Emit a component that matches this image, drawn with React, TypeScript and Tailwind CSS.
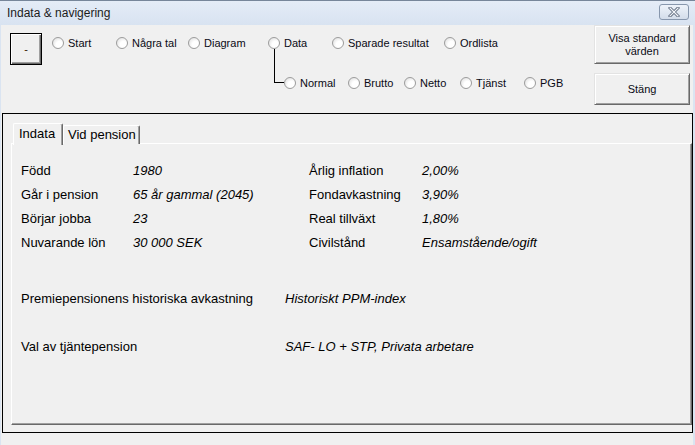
import React from "react";

const Radio = ({ label, w }: { label: string; w?: string }) => (
  <div className={`flex items-center gap-[4px] h-[14px] shrink-0 ${w ?? ""}`}>
    <span className="w-[12px] h-[12px] rounded-full border border-[#9c9c9c] bg-[radial-gradient(circle_at_65%_65%,#ffffff_35%,#d8d8d8_100%)] shrink-0" />
    <span className="text-[11px] leading-[14px] text-[#0a0a14] whitespace-nowrap">{label}</span>
  </div>
);

const btn3d =
  "bg-[#f0f0f0] border border-t-[#e3e3e3] border-l-[#e3e3e3] border-b-[#696969] border-r-[#696969] shadow-[inset_1px_1px_0_#ffffff,inset_-1px_-1px_0_#a0a0a0]";

const Row = ({ a, b, c, d }: { a: string; b: string; c: string; d: string }) => (
  <div className="flex h-[24px] items-center text-[13px] leading-[24px]">
    <div className="w-[112px] shrink-0">{a}</div>
    <div className="w-[176px] shrink-0 italic">{b}</div>
    <div className="w-[113px] shrink-0">{c}</div>
    <div className="italic">{d}</div>
  </div>
);

export default function App() {
  return (
    <div className="w-[695px] h-[445px] flex flex-col overflow-hidden bg-[#dae4f1] font-['Liberation_Sans',Arial,sans-serif] text-black">
      {/* Title bar */}
      <div className="h-[25px] shrink-0 flex items-start justify-between pl-[7px] pr-[6px] border-t border-[#77869a] bg-gradient-to-b from-[#e4ecf7] to-[#d8e3f1]">
        <span className="text-[12px] leading-[24px] text-[#1b1b1b]">Indata &amp; navigering</span>
        <div className="mt-[3px] w-[30px] h-[16px] rounded-[3px] border border-[#8797ad] bg-gradient-to-b from-[#eef3fa] to-[#d3ddea] flex items-center justify-center">
          <svg width="12" height="10" viewBox="0 0 12 10">
            <path d="M2 1 L10 9 M10 1 L2 9" stroke="#5e6b7e" strokeWidth="3" strokeLinecap="square" />
            <path d="M2 1 L10 9 M10 1 L2 9" stroke="#f4f6fa" strokeWidth="1.2" strokeLinecap="square" />
          </svg>
        </div>
      </div>

      {/* Body */}
      <div className="flex-1 ml-[1px] mr-[2px] bg-[#f0f0f0] flex flex-col">
        {/* Top navigation area */}
        <div className="h-[88px] shrink-0 flex items-start">
          <button className="ml-[9px] mt-[8px] w-[32px] h-[32px] border border-black bg-[#f0f0f0] shadow-[inset_1px_1px_0_#ffffff,inset_-1px_-1px_0_#696969,inset_-2px_-2px_0_#a0a0a0] text-[11px] leading-[14px] flex items-center justify-center text-[#3a2000]">
            -
          </button>

          <div className="ml-[10px] mt-[11px] flex flex-col">
            <div className="flex items-center">
              <Radio label="Start" w="w-[64px]" />
              <Radio label="Några tal" w="w-[72px]" />
              <Radio label="Diagram" w="w-[80px]" />
              <Radio label="Data" w="w-[64px]" />
              <Radio label="Sparade resultat" w="w-[112px]" />
              <Radio label="Ordlista" />
            </div>
            <div className="flex items-end h-[14px] mt-[26px] ml-[222px]">
              <div className="w-[10px] h-[34px] mb-[7px] border-l border-b border-black shrink-0" />
              <div className="flex items-center h-[14px]">
                <Radio label="Normal" w="w-[64px]" />
                <Radio label="Brutto" w="w-[56px]" />
                <Radio label="Netto" w="w-[56px]" />
                <Radio label="Tjänst" w="w-[64px]" />
                <Radio label="PGB" />
              </div>
            </div>
          </div>

          <div className="ml-auto mr-[3px] w-[96px] flex flex-col">
            <button className={`${btn3d} h-[39px] text-[11px] leading-[13px] flex items-center justify-center text-center text-[#0a0a14]`}>
              Visa standard
              <br />
              värden
            </button>
            <button className={`${btn3d} h-[32px] mt-[9px] text-[11px] leading-[13px] flex items-center justify-center text-[#0a0a14]`}>
              Stäng
            </button>
          </div>
        </div>

        {/* Frame */}
        <div className="h-[320px] shrink-0 ml-[1px] border border-black flex flex-col pt-[8px] pl-[8px]">
          {/* Tabs */}
          <div className="flex items-end h-[22px] ml-[2px] relative z-10">
            <div className="w-[50px] h-[22px] -mb-[1px] bg-[#f0f0f0] border-t border-l border-white border-r border-r-[#696969] shadow-[inset_-1px_0_0_#a0a0a0] rounded-t-[2px] flex items-center pl-[5px] pb-[1px] text-[13px]">
              Indata
            </div>
            <div className="w-[77px] h-[19px] bg-[#f0f0f0] border-t border-l border-white border-r border-r-[#696969] shadow-[inset_-1px_0_0_#a0a0a0] rounded-t-[2px] flex items-center pl-[4px] text-[13px]">
              Vid pension
            </div>
          </div>
          {/* Tab page */}
          <div className="h-[282px] shrink-0 -mt-[1px] border-t border-l border-white border-r border-b border-r-[#696969] border-b-[#696969] shadow-[inset_-1px_-1px_0_#a0a0a0] pl-[9px] pt-[15px] flex flex-col">
            <Row a="Född" b="1980" c="Årlig inflation" d="2,00%" />
            <Row a="Går i pension" b="65 år gammal (2045)" c="Fondavkastning" d="3,90%" />
            <Row a="Börjar jobba" b="23" c="Real tillväxt" d="1,80%" />
            <Row a="Nuvarande lön" b="30 000 SEK" c="Civilstånd" d="Ensamstående/ogift" />

            <div className="flex h-[24px] items-center text-[13px] mt-[32px]">
              <div className="w-[264px] shrink-0 whitespace-nowrap">Premiepensionens historiska avkastning</div>
              <div className="italic">Historiskt PPM-index</div>
            </div>
            <div className="flex h-[24px] items-center text-[13px] mt-[24px]">
              <div className="w-[264px] shrink-0">Val av tjäntepension</div>
              <div className="italic">SAF- LO + STP, Privata arbetare</div>
            </div>
          </div>
        </div>
      </div>
    </div>
  );
}
